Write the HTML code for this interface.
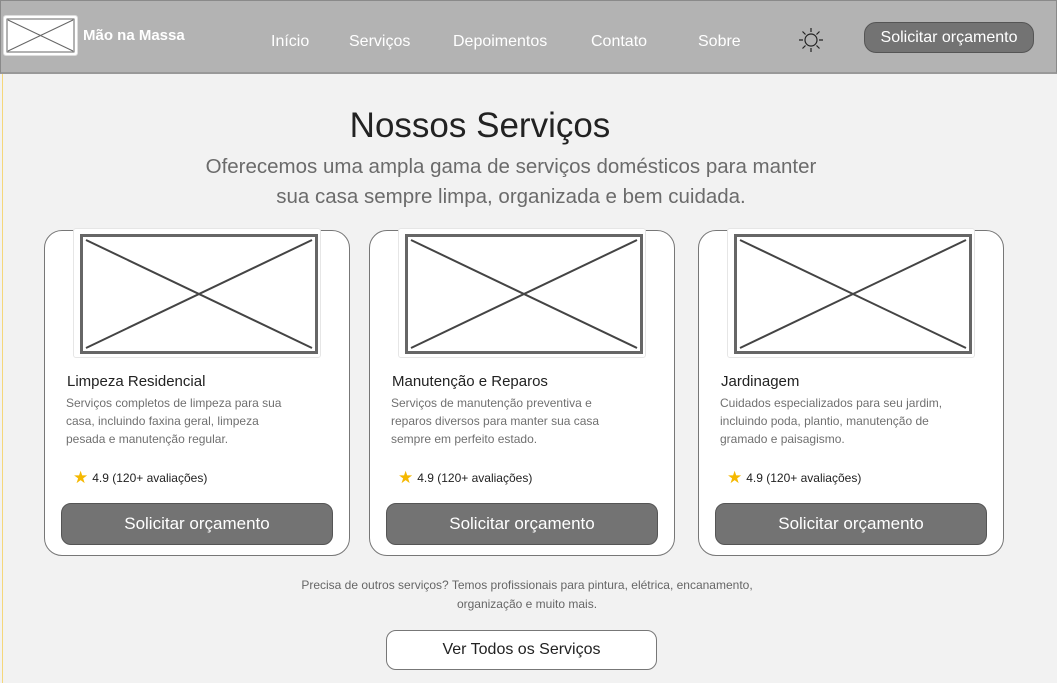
<!DOCTYPE html>
<html><head><meta charset="utf-8"><style>
*{margin:0;padding:0;box-sizing:border-box}
body{width:1057px;height:683px;background:#f2f2f2;font-family:"Liberation Sans",sans-serif;position:relative;overflow:hidden}
.hdr{position:absolute;left:0;top:0;width:1057px;height:74px;background:#b3b3b3;border:1px solid #8a8a8a;border-bottom:2px solid #999}
.abs{position:absolute}
.nav{position:absolute;top:33px;color:#fff;font-size:16px}
.card{position:absolute;top:230px;width:306px;height:326px;background:#fff;border:1px solid #777;border-radius:18px}
.img{position:absolute;left:28px;top:-3px;width:248px;height:130px;background:#fff;border:1px solid #e6e6e6;border-radius:3px}
.img svg{position:absolute;left:6px;top:5px}
.t{position:absolute;left:22px;top:142px;font-size:15px;color:#222}
.d{position:absolute;left:21px;top:163px;width:228px;font-size:12px;line-height:18px;color:#707070}
.r{position:absolute;left:28px;top:237px;font-size:12px;color:#222;display:flex;align-items:center;gap:4px}
.b{position:absolute;left:16px;top:272px;width:272px;height:42px;background:#737373;border:1px solid #555;border-radius:10px;color:#fff;font-size:17px;text-align:center;line-height:40px}
</style></head><body>
<div class="abs" style="left:2px;top:74px;width:1px;height:609px;background:#f5d77a"></div>
<div class="hdr"></div>
<div class="abs" style="left:3px;top:15px;width:75px;height:41px;background:#fff;border:1px solid #ddd;border-radius:3px">
<svg width="73" height="39" style="position:absolute;left:0;top:0"><rect x="3" y="3" width="67" height="33" fill="none" stroke="#666" stroke-width="1"/><path d="M4 4L69 35M69 4L4 35" stroke="#666" stroke-width="1"/></svg></div>
<div class="abs" style="left:83px;top:27px;color:#fff;font-size:15px;font-weight:bold">Mão na Massa</div>
<div class="nav" style="left:271px">Início</div>
<div class="nav" style="left:349px">Serviços</div>
<div class="nav" style="left:453px">Depoimentos</div>
<div class="nav" style="left:591px">Contato</div>
<div class="nav" style="left:698px">Sobre</div>
<svg class="abs" style="left:797px;top:26px" width="28" height="28" viewBox="0 0 28 28" fill="none" stroke="#222" stroke-width="1.2"><circle cx="14" cy="14" r="6"/><path d="M14 2v4M14 22v4M2 14h4M22 14h4M5.5 5.5l3 3M19.5 19.5l3 3M22.5 5.5l-3 3M8.5 19.5l-3 3"/></svg>
<div class="abs" style="left:864px;top:22px;width:170px;height:31px;background:#737373;border:1px solid #555;border-radius:12px;color:#fff;font-size:16px;text-align:center;line-height:29px">Solicitar orçamento</div>
<div class="abs" style="left:0;width:960px;top:106px;text-align:center;font-size:35px;color:#222">Nossos Serviços</div>
<div class="abs" style="left:0;width:1022px;top:152px;text-align:center;font-size:20.5px;line-height:30px;color:#6b6b6b">Oferecemos uma ampla gama de serviços domésticos para manter<br>sua casa sempre limpa, organizada e bem cuidada.</div>

<div class="card" style="left:44px">
<div class="img"><svg width="238" height="120"><rect x="1.5" y="1.5" width="235" height="117" fill="none" stroke="#666" stroke-width="3"/><path d="M6 6L232 114M232 6L6 114" stroke="#444" stroke-width="2"/></svg></div>
<div class="t">Limpeza Residencial</div>
<div class="d">Serviços completos de limpeza para sua casa, incluindo faxina geral, limpeza pesada e manutenção regular.</div>
<div class="r"><span style="color:#f5b800;font-size:17px">★</span>4.9 (120+ avaliações)</div>
<div class="b">Solicitar orçamento</div></div>

<div class="card" style="left:369px">
<div class="img"><svg width="238" height="120"><rect x="1.5" y="1.5" width="235" height="117" fill="none" stroke="#666" stroke-width="3"/><path d="M6 6L232 114M232 6L6 114" stroke="#444" stroke-width="2"/></svg></div>
<div class="t">Manutenção e Reparos</div>
<div class="d">Serviços de manutenção preventiva e reparos diversos para manter sua casa sempre em perfeito estado.</div>
<div class="r"><span style="color:#f5b800;font-size:17px">★</span>4.9 (120+ avaliações)</div>
<div class="b">Solicitar orçamento</div></div>

<div class="card" style="left:698px">
<div class="img"><svg width="238" height="120"><rect x="1.5" y="1.5" width="235" height="117" fill="none" stroke="#666" stroke-width="3"/><path d="M6 6L232 114M232 6L6 114" stroke="#444" stroke-width="2"/></svg></div>
<div class="t">Jardinagem</div>
<div class="d">Cuidados especializados para seu jardim, incluindo poda, plantio, manutenção de gramado e paisagismo.</div>
<div class="r"><span style="color:#f5b800;font-size:17px">★</span>4.9 (120+ avaliações)</div>
<div class="b">Solicitar orçamento</div></div>

<div class="abs" style="left:0;width:1054px;top:576px;text-align:center;font-size:12px;line-height:19px;color:#666">Precisa de outros serviços? Temos profissionais para pintura, elétrica, encanamento,<br>organização e muito mais.</div>
<div class="abs" style="left:386px;top:630px;width:271px;height:40px;background:#fff;border:1px solid #777;border-radius:10px;text-align:center;line-height:38px;font-size:16px;color:#222">Ver Todos os Serviços</div>
</body></html>
